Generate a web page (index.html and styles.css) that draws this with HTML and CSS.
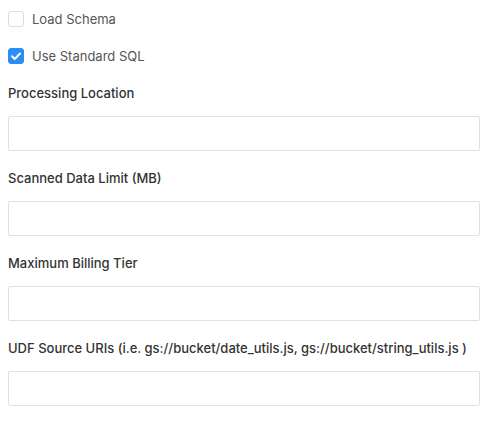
FILE: index.html
```html
<!DOCTYPE html>
<html>
<head>
<meta charset="utf-8">
<link rel="stylesheet" href="styles.css">
</head>
<body>
<form class="form">
  <label class="check">
    <span class="box"></span>
    <span class="check-text">Load Schema</span>
  </label>
  <label class="check">
    <span class="box checked">
      <svg viewBox="0 0 16 16" width="16" height="16"><path d="M4 8.3 L6.8 11 L12 5.5" fill="none" stroke="#fff" stroke-width="2" stroke-linecap="round" stroke-linejoin="round"/></svg>
    </span>
    <span class="check-text">Use Standard SQL</span>
  </label>
  <div class="field">
    <div class="label">Processing Location</div>
    <input class="input" type="text">
  </div>
  <div class="field">
    <div class="label">Scanned Data Limit (MB)</div>
    <input class="input" type="text">
  </div>
  <div class="field">
    <div class="label">Maximum Billing Tier</div>
    <input class="input" type="text">
  </div>
  <div class="field">
    <div class="label">UDF Source URIs (i.e. gs://bucket/date_utils.js, gs://bucket/string_utils.js )</div>
    <input class="input" type="text">
  </div>
</form>
</body>
</html>
```
FILE: styles.css
```css
html, body {
  margin: 0;
  padding: 0;
  background: #fff;
}
body {
  font-family: Inter, "Liberation Sans", sans-serif;
  font-size: 13px;
  color: #333;
}
.form {
  display: flex;
  flex-direction: column;
  padding: 11px 12px 0 8px;
}
.check {
  display: flex;
  align-items: center;
  gap: 8px;
  height: 16px;
  margin-bottom: 21px;
  color: #555;
}
.box {
  width: 16px;
  height: 16px;
  box-sizing: border-box;
  border: 1px solid #dcdcdc;
  border-radius: 3px;
  background: #fff;
  display: flex;
}
.box.checked {
  background: #2b8ef3;
  border-color: #2b8ef3;
}
.box.checked svg {
  margin: -1px;
}
.field {
  display: flex;
  flex-direction: column;
  margin-bottom: 19px;
}
.label {
  font-weight: 500;
  color: #333;
  line-height: 16px;
  margin-bottom: 15px;
}
.input {
  height: 35px;
  box-sizing: border-box;
  border: 1px solid #e1e1e1;
  border-radius: 2px;
  margin: 0;
  padding: 0 8px;
  font: inherit;
  outline: none;
}
```
